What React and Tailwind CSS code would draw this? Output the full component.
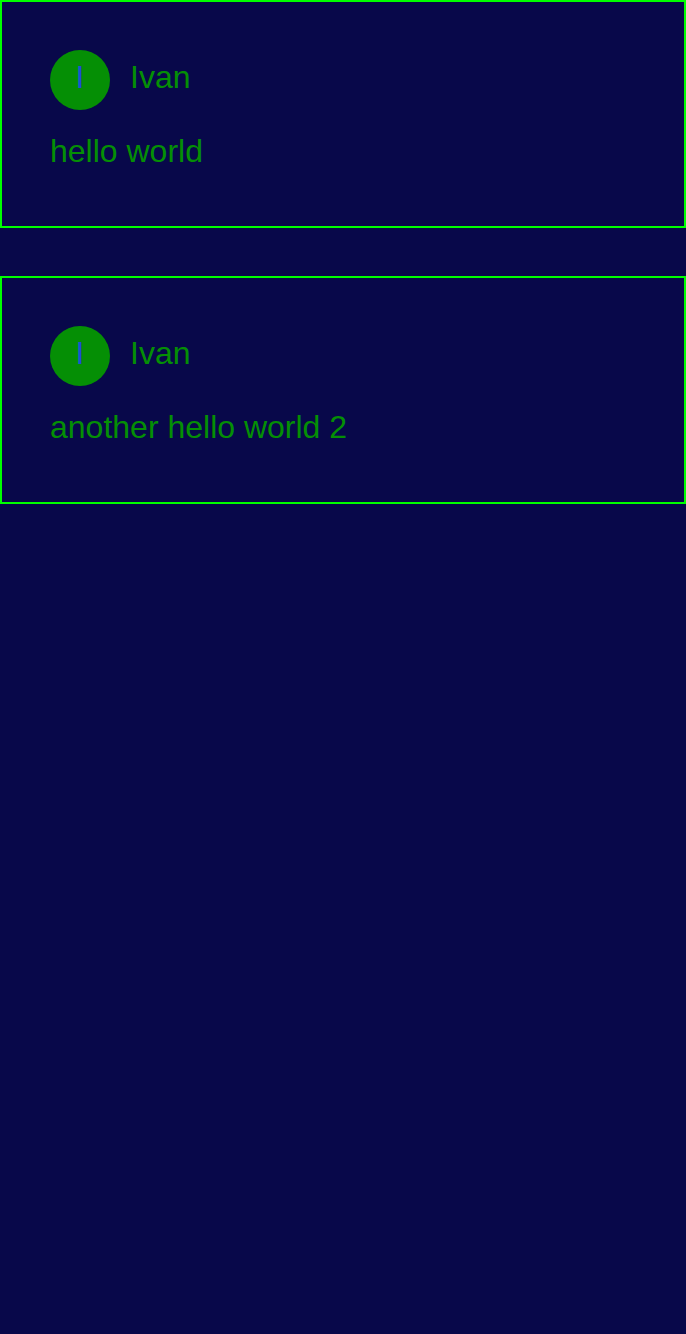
import React from 'react';

const posts = [
  { id: 1, author: 'Ivan', text: 'hello world' },
  { id: 2, author: 'Ivan', text: 'another hello world 2' },
];

const PostCard = ({ author, text }) => (
  <div className="border-2 border-[#00ff00] px-[48px] pt-[48px] pb-[51px]">
    <div className="flex items-center gap-5 h-[60px]">
      <div className="w-[60px] h-[60px] rounded-full bg-[#058f05] flex items-center justify-center pb-[6px] text-[32px] text-[#1c4fd6]">
        {author[0]}
      </div>
      <span className="text-[32px] text-[#058f05] mb-[6px]">{author}</span>
    </div>
    <p className="mt-[17px] text-[32px] leading-[48px] text-[#058f05]">{text}</p>
  </div>
);

export default function App() {
  return (
    <div
      className="min-h-screen bg-[#08084a] flex flex-col gap-12"
      style={{ fontFamily: '"Liberation Sans", Arial, sans-serif' }}
    >
      {posts.map((p) => (
        <PostCard key={p.id} author={p.author} text={p.text} />
      ))}
    </div>
  );
}
